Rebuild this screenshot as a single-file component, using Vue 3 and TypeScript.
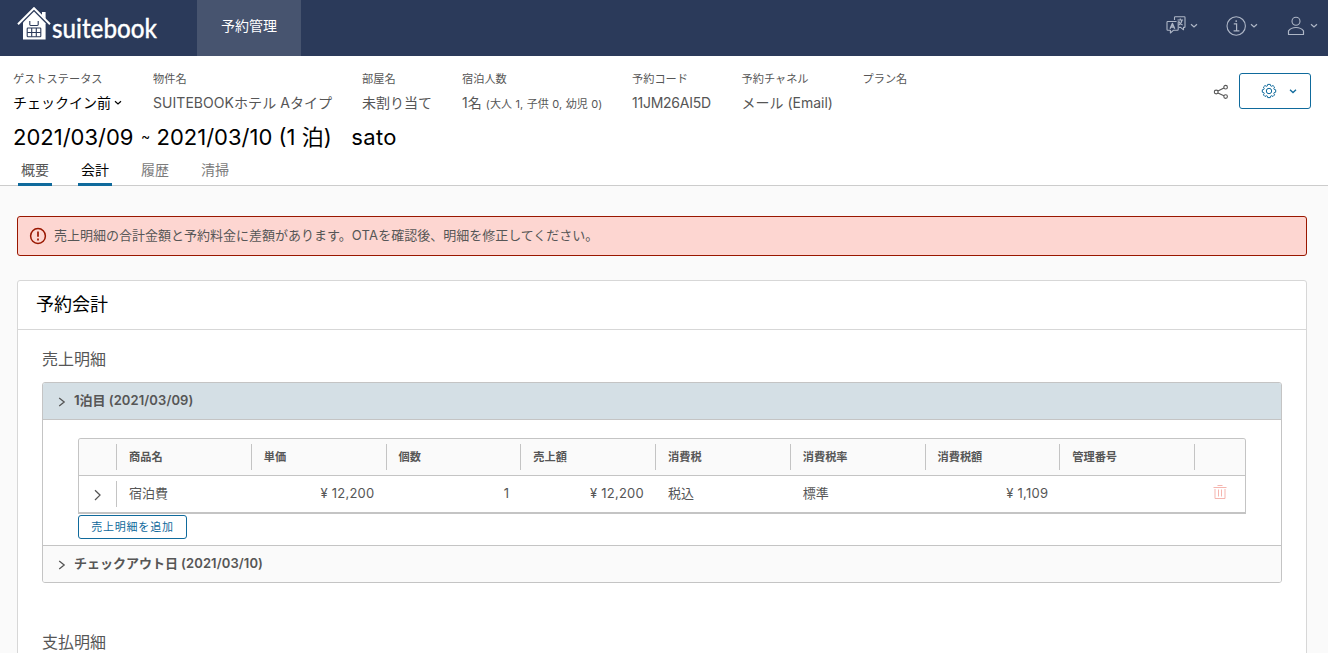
<script setup lang="ts">
interface Fact { label: string; value: string; width: number; sub?: string; cls?: string }

const facts: Fact[] = [
  { label: 'ゲストステータス', value: 'チェックイン前', width: 140, cls: 'status' },
  { label: '物件名', value: 'SUITEBOOKホテル Aタイプ', width: 209, cls: 'hotel' },
  { label: '部屋名', value: '未割り当て', width: 100 },
  { label: '宿泊人数', value: '1名', width: 170, sub: '(大人 1, 子供 0, 幼児 0)' },
  { label: '予約コード', value: '11JM26AI5D', width: 109.5, cls: 'code' },
  { label: '予約チャネル', value: 'メール (Email)', width: 121, cls: 'mail' },
  { label: 'プラン名', value: '', width: 60 },
]

const tabs = [
  { text: '概要', line: true, active: false, dim: false },
  { text: '会計', line: true, active: true, dim: false },
  { text: '履歴', line: false, active: false, dim: true },
  { text: '清掃', line: false, active: false, dim: true },
]

const columns = [
  { name: '商品名', value: '宿泊費', right: false },
  { name: '単価', value: '¥ 12,200', right: true },
  { name: '個数', value: '1', right: true },
  { name: '売上額', value: '¥ 12,200', right: true },
  { name: '消費税', value: '税込', right: false },
  { name: '消費税率', value: '標準', right: false },
  { name: '消費税額', value: '¥ 1,109', right: true },
  { name: '管理番号', value: '', right: false },
]
</script>

<template>
  <div class="page">
    <header class="top">
      <svg class="logo" width="143" height="42" viewBox="0 0 143 42">
        <path d="M1 18.2 17 2.2 33 18.2" fill="none" stroke="#fff" stroke-width="2" />
        <path d="M25 6h3.6v7l-3.600-3.600z" fill="#fff" />
        <path d="M17 5.600 28.600 17.200V33.400H6V16.600z" fill="#fff" />
        <path d="M12.800 15v3.600q0 .9.900.900h6.600q.9 0 .9-.900V15" fill="none" stroke="#2b3a5a" stroke-width="1.1" />
        <g fill="none" stroke="#2b3a5a" stroke-width="1.1">
          <rect x="10.200" y="22" width="13.600" height="8.800" rx=".8" />
          <path d="M10.200 26.500h13.600M14.700 22v8.800M19.300 22v8.800" />
        </g>
        <text x="35" y="31.800" textLength="105" lengthAdjust="spacingAndGlyphs" class="brand">suitebook</text>
      </svg>
      <div class="nav">予約管理</div>
      <div class="tools">
        <svg width="162" height="24" viewBox="0 0 162 24" fill="none" stroke="#aeb6c6" stroke-width="1.1">
          <g stroke-linejoin="round">
            <path d="M8.500 7V4.500Q8.500 3.800 9.200 3.800h9.100q.7 0 .7.700v9.200q0 .7-.7.700h-.8v2.400l-2.900-2.400H12.800" />
            <path d="M12.200 8.600V16.500q0 .7-.7.700H7.600L4.400 20v-2.800H1.700q-.7 0-.7-.7V9.200q0-.7.700-.7h8.800" />
            <path d="M4.100 15.800 6.400 10.400 8.700 15.800M4.900 14h3" stroke-width="1.400" />
            <path d="M11.500 7h5.600M14.300 5.600V7M12.600 12c2-.8 3-2.200 3.300-5M12.600 8.300c.7 1.900 2 3 4 3.700" stroke-width="1.200" />
          </g>
          <path d="m25 11.200 3 2.800 3-2.800M85 11.200l3 2.800 3-2.800M145 11.200l3 2.800 3-2.800" stroke-width="1.200" />
          <circle cx="70.200" cy="13" r="9.200" />
          <path d="M67.800 10.800h2.800v6.800M67.600 17.800h5.800" stroke-width="1.200" />
          <circle cx="70.200" cy="8.100" r=".9" fill="#aeb6c6" stroke="none" />
          <circle cx="130" cy="8.200" r="4" />
          <path d="M122.500 21.500v-3.600c1.700-2.300 4.100-3.400 7.500-3.400s5.800 1.100 7.500 3.400v3.600z" stroke-linejoin="round" stroke-width="1.200" />
        </svg>
      </div>
    </header>

    <section class="booking">
      <div class="facts">
        <div v-for="f in facts" :key="f.label" class="fact" :style="{ width: f.width + 'px' }">
          <div class="label">{{ f.label }}</div>
          <div class="value" :class="f.cls">
            <span>{{ f.value }}</span><small v-if="f.sub">{{ f.sub }}</small><svg v-if="f.cls === 'status'" width="8" height="6" viewBox="0 0 8 6"><path d="m1 1.200 3 2.800 3-2.800" fill="none" stroke="#000" stroke-width="1.200" /></svg>
          </div>
        </div>
        <div class="actions">
          <svg width="16" height="16" viewBox="0 0 16 16" fill="none" stroke="#565656" stroke-width="1.1">
            <circle cx="3.200" cy="9" r="1.900" /><circle cx="12.600" cy="4.200" r="1.800" /><circle cx="12.600" cy="13.600" r="1.800" />
            <path d="m4.900 8.100 6-3M4.900 9.900l6 2.900" />
          </svg>
          <button class="gear">
            <svg width="38" height="16" viewBox="0 0 38 16" fill="none" stroke="#0f6a9c">
              <path d="M6.700 1.400h2.600l.4 1.500.9.400 1.400-.8 1.600 1.600-.8 1.400.4.900 1.500.4v2.400l-1.500.4-.4.900.8 1.400-1.600 1.600-1.400-.8-.9.400-.4 1.500H6.700l-.4-1.500-.9-.4-1.400.8-1.600-1.600.8-1.400-.4-.9-1.500-.4V6.800l1.500-.4.4-.9-.8-1.400L4 2.500l1.400.8.9-.4z" stroke-linejoin="round" />
              <circle cx="8" cy="8" r="2.700" />
              <path d="m29 6.700 3 2.800 3-2.800" stroke-width="1.300" />
            </svg>
          </button>
        </div>
      </div>
      <h1><span>2021/03/09</span><span class="tilde">~</span><span>2021/03/10 (1 泊)</span><span class="guest">sato</span></h1>
      <nav class="tabs">
        <a v-for="t in tabs" :key="t.text" :class="{ line: t.line, active: t.active, dim: t.dim }">{{ t.text }}</a>
      </nav>
    </section>

    <main>
      <div class="alert">
        <svg width="18" height="18" viewBox="0 0 18 18" fill="none" stroke="#991700">
          <circle cx="9" cy="9" r="7.400" stroke-width="1.500" />
          <path d="M9 4.500v5.300M9 11.600v1.800" stroke-width="1.700" />
        </svg>
        <span>売上明細の合計金額と予約料金に差額があります。<i>OTA</i>を確認後、明細を修正してください。</span>
      </div>

      <div class="card">
        <h2>予約会計</h2>
        <div class="body">
          <h3>売上明細</h3>
          <div class="accordion">
            <div class="fold open">
              <svg width="8" height="10" viewBox="0 0 8 10"><path d="m1.200.9 5 4.100-5 4.100" /></svg>
              <b>1泊目 <span class="day">(2021/03/09)</span></b>
            </div>
            <div class="panel">
              <div class="grid">
                <div class="row head">
                  <div class="cell first"></div>
                  <div v-for="c in columns" :key="c.name" class="cell">{{ c.name }}</div>
                  <div class="cell"></div>
                </div>
                <div class="row data">
                  <div class="cell first">
                    <svg class="chev" width="10" height="14" viewBox="0 0 10 14"><path d="m2 2.200 5 4.900-5 4.900" /></svg>
                  </div>
                  <div v-for="c in columns" :key="c.name" class="cell" :class="{ right: c.right }">{{ c.value }}</div>
                  <div class="cell trash">
                    <svg width="14" height="16" viewBox="0 0 14 16" fill="none" stroke="#f5b5af">
                      <path d="M.500 3.500h13M4.500 1.500h5M2 5v9.500h10V5M5.500 5.500v7M8.500 5.500v7" />
                    </svg>
                  </div>
                </div>
              </div>
              <button class="add">売上明細を追加</button>
            </div>
            <div class="fold last">
              <svg width="8" height="10" viewBox="0 0 8 10"><path d="m1.200.9 5 4.100-5 4.100" /></svg>
              <b>チェックアウト日 <span class="day">(2021/03/10)</span></b>
            </div>
          </div>
          <h3 class="pay">支払明細</h3>
        </div>
      </div>
    </main>
  </div>
</template>

<style>
body { margin: 0; overflow: hidden; }
</style>

<style scoped>
.page {
  height: 653px;
  overflow: hidden;
  background: #fafafa;
  color: #565656;
  font-family: Inter, "Noto Sans CJK JP", sans-serif;
  font-size: 13px;
  line-height: 24px;
}
.page * { box-sizing: border-box; }
svg { display: block; flex: none; }
.top { display: flex; height: 56px; background: #2b3a5a; }
.logo { margin: 6px 37px 0 17px; overflow: visible; }
.brand { font-family: Lato, sans-serif; font-size: 26px; font-weight: 500; fill: #fff; stroke: #fff; stroke-width: .3px; }
.nav { width: 104px; background: #47546f; color: #fff; font-size: 14px; line-height: 51px; text-align: center; }
.tools { margin: 13px 0 0 auto; width: 162px; }
.booking { height: 130px; background: #fff; border-bottom: 1px solid #ccc; padding-left: 13px; }
.facts { display: flex; height: 65px; padding-top: 14px; }
.fact { flex: none; white-space: nowrap; }
.label { font-size: 11.2px; line-height: 18px; }
.value { display: flex; align-items: baseline; height: 24px; margin-top: 3px; font-size: 14px; line-height: 24px; }
.value small { margin-left: 4px; font-size: 11px; letter-spacing: .16px; }
.status { color: #000; }
.status svg { align-self: center; margin-left: 3px; }
.hotel { letter-spacing: .05px; }
.code { letter-spacing: -.25px; }
.actions { display: flex; align-items: center; margin: 3px 17px 0 auto; height: 36px; gap: 10px; }
button { font-family: inherit; background: #fff; border: 1px solid #0f6a9c; border-radius: 3px; color: #0f6a9c; padding: 0; }
.gear { width: 72px; height: 36px; padding-left: 21px; }
h1 { display: flex; margin: 0; height: 32px; font-size: 22px; font-weight: 400; line-height: 32px; color: #000; white-space: nowrap; }
.tilde { width: 23px; padding-left: 1px; text-align: center; font-size: 14px; line-height: 30px; }
.guest { margin-left: 19.5px; letter-spacing: .4px; }
.tabs { display: flex; gap: 26px; padding-left: 5px; }
.tabs a { width: 34px; height: 33px; text-align: center; font-size: 14px; line-height: 33px; }
.tabs .line { border-bottom: 3px solid #0f6a9c; }
.tabs .active { color: #000; }
.tabs .dim { color: #7b7b7b; }
main { padding: 30px 21px 0 17px; }
.alert { display: flex; align-items: center; height: 40px; gap: 7px; padding-left: 11px; border: 1px solid #991700; border-radius: 3px; background: #fdd6d1; }
.alert span { padding-bottom: 2px; }
.alert i { font-style: normal; letter-spacing: .2px; }
.card { height: 500px; margin-top: 24px; border: 1px solid #d7d7d7; border-radius: 3px; background: #fff; }
h2 { margin: 0; height: 49px; border-bottom: 1px solid #d7d7d7; padding-left: 18px; font-size: 18px; font-weight: 400; line-height: 47px; color: #000; }
.body { padding: 17px 24px; }
h3 { margin: 0; height: 35px; font-size: 16px; font-weight: 400; line-height: 24px; }
.accordion { border: 1px solid #c4c4c4; border-radius: 3px; overflow: hidden; }
.fold { display: flex; align-items: center; height: 37px; padding-left: 15px; gap: 8px; background: #fafafa; }
.fold svg { margin-top: 2px; }
.fold path, .chev path { fill: none; stroke: #565656; stroke-width: 1.3; }
.fold b { font-weight: 700; margin-top: -2px; }
.fold .day { font-weight: 600; letter-spacing: .1px; }
.fold.open { background: #d4dfe5; border-bottom: 1px solid #c4c4c4; }
.fold.last { height: 36px; }
.panel { height: 126px; padding: 18px 35px 0; border-bottom: 1px solid #c4c4c4; }
.grid { border: 1px solid #c4c4c4; border-bottom-width: 2px; border-radius: 3px 3px 0 0; overflow: hidden; }
.row { display: grid; grid-template-columns: 37px repeat(8, 134.75px) 1fr; padding-top: 5px; height: 36px; }
.row.head { height: 37px; background: #fafafa; border-bottom: 1px solid #c4c4c4; font-size: 11.2px; font-weight: 700; }
.cell { height: 26px; border-left: 1px solid #c4c4c4; padding: 0 11px 0 12px; line-height: 25px; }
.head .cell { line-height: 27px; }
.cell.first { border-left: 0; }
.data .cell { border-left-color: transparent; }
.data .cell:nth-child(2) { border-left-color: #c4c4c4; }
.right { text-align: right; letter-spacing: .25px; }
.chev { margin: 7px 0 0 2px; }
.trash { padding-left: 18px; padding-top: 3px; }
.add { display: block; width: 109px; height: 24px; margin-top: 1px; font-size: 11px; letter-spacing: .76px; line-height: 22px; }
.pay { margin-top: 47px; }
</style>
